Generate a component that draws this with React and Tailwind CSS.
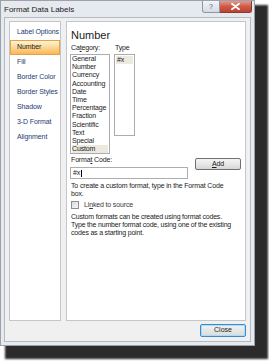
import clsx from 'clsx';

const navItems = [
  'Label Options',
  'Number',
  'Fill',
  'Border Color',
  'Border Styles',
  'Shadow',
  '3-D Format',
  'Alignment',
];

const categories = [
  'General',
  'Number',
  'Currency',
  'Accounting',
  'Date',
  'Time',
  'Percentage',
  'Fraction',
  'Scientific',
  'Text',
  'Special',
  'Custom',
];

function CaptionButtons() {
  return (
    <div className="flex h-[12px] self-start">
      <div className="w-[18px] h-full flex items-center justify-center border border-t-0 border-[#8d97a3] rounded-bl-[3px] bg-gradient-to-b from-[#f3f5f8] to-[#d5dbe3] text-[7px] leading-none text-[#4b5a6b]">
        ?
      </div>
      <div className="w-[32px] h-full flex items-center justify-center border border-t-0 border-l-0 border-[#8a3a32] rounded-br-[3px] bg-gradient-to-b from-[#e3998d] via-[#cc5a48] to-[#c0412f]">
        <svg width="9" height="7" viewBox="0 0 9 7">
          <path d="M1 0.8 L8 6.2 M8 0.8 L1 6.2" stroke="#ffffff" strokeWidth="1.8" strokeLinecap="round" />
        </svg>
      </div>
    </div>
  );
}

function Checkbox() {
  return (
    <div className="w-[8px] h-[8px] border border-[#8e8f8f] bg-gradient-to-br from-[#dcdcdc] to-[#f7f7f7]" />
  );
}

export default function App() {
  return (
    <div
      className="w-[269px] h-[361px] bg-white overflow-hidden"
      style={{ fontFamily: '"Liberation Sans", Arial, sans-serif' }}
    >
      <div className="w-[255px] h-[346px] flex flex-col bg-[#e6e9ed] border border-[#9aa2ab] shadow-[9px_9px_2px_4px_#2b2b2b]">
        {/* title bar */}
        <div className="h-[16px] flex justify-between pl-[3px] pr-[2px]">
          <span className="text-[8px] leading-[17px] text-[#1b1b1b]">Format Data Labels</span>
          <CaptionButtons />
        </div>

        {/* client area */}
        <div className="flex-1 mx-[3px] mb-[3px] flex flex-col bg-[#f0f0f0] border border-[#b4bac2] px-[4px] pt-[3px]">
          <div className="flex gap-[5px] h-[300px]">
            {/* nav */}
            <div className="w-[54px] bg-white border border-[#c3c6cc] pt-[3px] text-[7px] tracking-[-0.1px] text-[#1e3b72]">
              {navItems.map((item) => (
                <div
                  key={item}
                  className={clsx(
                    'h-[15px] flex items-center pl-[6px] border whitespace-nowrap',
                    item === 'Number'
                      ? 'border-[#e5a243] bg-gradient-to-b from-[#fff3d6] via-[#fcd793] to-[#f9b753] text-[#1b1b1b]'
                      : 'border-transparent',
                  )}
                >
                  {item}
                </div>
              ))}
            </div>

            {/* number panel */}
            <div className="flex-1 bg-white border border-[#c3c6cc] pl-[3px] pr-[4px] text-[7px] tracking-[-0.15px] text-[#1b1b1b] whitespace-nowrap">
              <div className="text-[11px] leading-[13px] tracking-normal pl-[1px] pt-[7px]">Number</div>
              <div className="flex gap-[4px] mt-[2px]">
                <div className="w-[40px]">
                  <div className="leading-[8px] pl-[1px] mb-[2px]">
                    Ca<span className="underline">t</span>egory:
                  </div>
                  <div className="h-[100px] border border-[#a9acb2] pl-[1px] pr-[1px]">
                    {categories.map((c) => (
                      <div
                        key={c}
                        className={clsx('h-[8.2px] leading-[8.2px]', c === 'Custom' && 'bg-[#ece9df]')}
                      >
                        {c}
                      </div>
                    ))}
                  </div>
                </div>
                <div className="w-[21px]">
                  <div className="leading-[8px] pl-[1px] mb-[2px]">Type</div>
                  <div className="h-[82px] border border-[#a9acb2] p-[1px]">
                    <div className="h-[8px] leading-[8px] bg-[#ece9df] pl-[1px]">#x</div>
                  </div>
                </div>
              </div>

              <div className="flex mt-[2px]">
                <div className="w-[118px]">
                  <div className="leading-[8px] pl-[1px]">
                    Forma<span className="underline">t</span> Code:
                  </div>
                  <div className="h-[12px] mt-[3px] border border-[#abadb3] flex items-center pl-[2px]">
                    #x<span className="w-px h-[7px] bg-black ml-[0.5px]" />
                  </div>
                </div>
                <div className="ml-[7px] mt-[2px] w-[46px] h-[12px] border border-[#707070] rounded-[2px] bg-gradient-to-b from-[#f4f4f4] via-[#e8e8e8] to-[#d5d5d5] flex items-center justify-center text-[7px]">
                  <span className="underline">A</span>dd
                </div>
              </div>

              <div className="mt-[3px] leading-[8px] pl-[1px]">
                To create a custom format, type in the Format Code
                <br />
                box.
              </div>
              <div className="flex items-center gap-[5px] mt-[3px] pl-[1px]">
                <Checkbox />
                <span className="leading-[8px] text-[#3b3b3b]">
                  Li<span className="underline">n</span>ked to source
                </span>
              </div>
              <div className="mt-[4px] leading-[8px] pl-[1px] tracking-[-0.2px]">
                Custom formats can be created using format codes.
                <br />
                Type the number format code, using one of the existing
                <br />
                codes as a starting point.
              </div>
            </div>
          </div>

          <div className="flex justify-end pt-[3px]">
            <div className="w-[46px] h-[13px] border border-[#3c8ccd] rounded-[2px] shadow-[inset_0_0_0_1px_#a9dcf6] bg-gradient-to-b from-[#f2f2f2] to-[#dbdbdb] flex items-center justify-center text-[7px] text-[#1b1b1b]">
              Close
            </div>
          </div>
        </div>
      </div>
    </div>
  );
}
